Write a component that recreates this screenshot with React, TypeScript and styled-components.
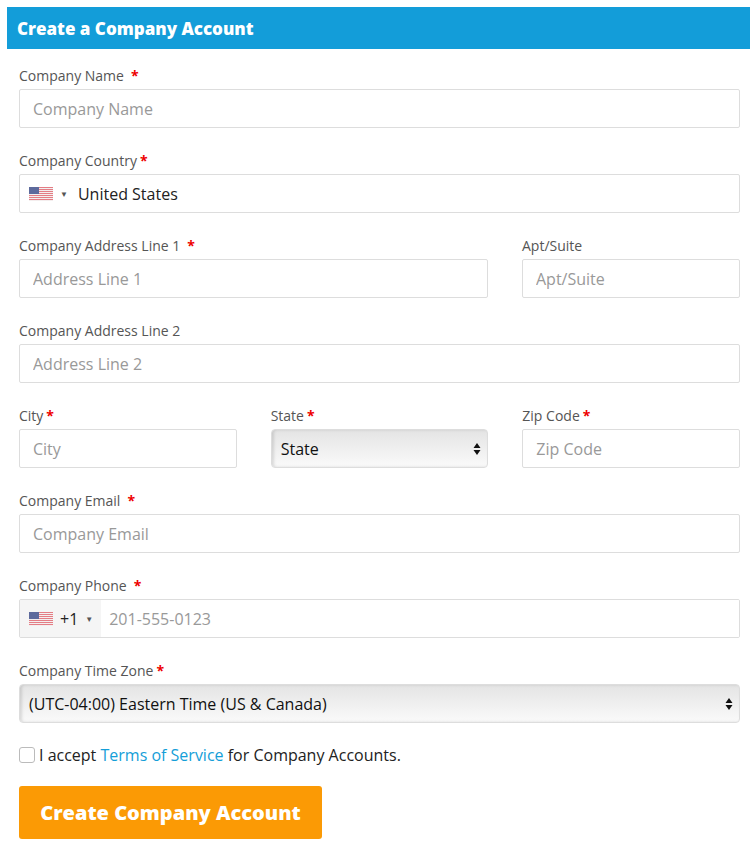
import React from "react";
import styled, { createGlobalStyle } from "styled-components";

const Global = createGlobalStyle`
  body { margin: 0; font-family: "Open Sans", sans-serif; background: #fff; }
  * { box-sizing: border-box; }
`;

const Page = styled.div`padding: 7px 6px 0 7px;`;
const Header = styled.div`
  background: #139dd9; color: #fff; font-weight: 800; font-size: 17px;
  height: 42px; display: flex; align-items: center; padding-left: 10px;
`;
const Form = styled.div`padding: 17px 10px 10px 12px; display: flex; flex-direction: column;`;
const Row = styled.div<{ cols: string }>`
  display: grid; grid-template-columns: ${p => p.cols}; column-gap: 34px;
`;
const Group = styled.div`display: flex; flex-direction: column; margin-bottom: 23px;`;
const Label = styled.label`
  font-size: 14px; color: #555; height: 20px; line-height: 20px; margin-bottom: 3px;
`;
const Star = styled.span<{ gap?: boolean }>`
  color: #e00; font-weight: 700; margin-left: ${p => (p.gap ? "7px" : "3px")};
`;
const Box = styled.div`
  height: 39px; border: 1px solid #ddd; border-radius: 2px; display: flex; align-items: center;
  font-size: 16px; color: #222; background: #fff; overflow: hidden;
`;
const Input = styled.input`
  height: 39px; border: 1px solid #ddd; border-radius: 2px; padding: 0 13px;
  font-family: "Open Sans", sans-serif; font-size: 16px; width: 100%;
  &::placeholder { color: #999; }
`;
const PhoneInput = styled.input`
  border: 0; flex: 1; height: 100%; padding: 0 8px;
  font-family: "Open Sans", sans-serif; font-size: 16px;
  &::placeholder { color: #999; }
`;
const Select = styled.div`
  height: 39px; border: 1px solid #ddd; border-radius: 4px; display: flex; align-items: center;
  justify-content: space-between; padding: 0 6px 0 9px; font-size: 16px; color: #111;
  background: linear-gradient(#e4e4e4, #fafafa);
  box-shadow: inset 2px 0 3px rgba(0,0,0,0.12);
`;
const FlagArea = styled.div<{ grey?: boolean }>`
  display: flex; align-items: center; gap: 7px; padding: 0 8px 0 9px; height: 100%;
  background: ${p => (p.grey ? "#f5f5f5" : "transparent")};
`;
const Caret = styled.span`font-size: 8px; color: #555;`;
const CheckRow = styled.div`display: flex; align-items: center; font-size: 16px; color: #222; margin-top: -2px;`;
const Check = styled.span`
  width: 16px; height: 16px; border: 1px solid #bbb; border-radius: 3px; margin-right: 4px;
`;
const Link = styled.a`color: #149ed8; text-decoration: none;`;
const Button = styled.button`
  margin-top: 20px; width: 303px; height: 53px; background: #fb9a05; color: #fff; border: 0;
  border-radius: 3px; font-family: "Open Sans", sans-serif; font-weight: 800; font-size: 20px;
`;

const Flag = () => (
  <svg width="24" height="14" viewBox="0 0 24 14">
    {Array.from({ length: 7 }).map((_, i) => (
      <rect key={i} x="0" y={i * 2} width="24" height="1" fill={"#e47d85"} />
    ))}
    <rect x="0" y="1" width="24" height="1" fill="#f2f2f2" />
    {[3, 5, 7, 9, 11, 13].map(y => <rect key={y} x="0" y={y} width="24" height="1" fill="#f4eeee" />)}
    <rect x="0" y="0" width="10" height="7" fill="#5d6a9c" />
  </svg>
);

const Arrows = () => (
  <svg width="8" height="14" viewBox="0 0 8 14">
    <path d="M4 1 L7.5 6 H0.5Z M4 13 L7.5 8 H0.5Z" fill="#111" />
  </svg>
);

export default function App() {
  return (
    <Page>
      <Global />
      <Header>Create a Company Account</Header>
      <Form>
        <Group>
          <Label>Company Name<Star gap>*</Star></Label>
          <Input placeholder="Company Name" />
        </Group>
        <Group>
          <Label>Company Country<Star>*</Star></Label>
          <Box>
            <FlagArea><Flag /><Caret>▼</Caret></FlagArea>
            <span style={{ marginLeft: 2 }}>United States</span>
          </Box>
        </Group>
        <Row cols="1fr 218px">
          <Group>
            <Label>Company Address Line 1<Star gap>*</Star></Label>
            <Input placeholder="Address Line 1" />
          </Group>
          <Group>
            <Label>Apt/Suite</Label>
            <Input placeholder="Apt/Suite" />
          </Group>
        </Row>
        <Group>
          <Label>Company Address Line 2</Label>
          <Input placeholder="Address Line 2" />
        </Group>
        <Row cols="1fr 1fr 1fr">
          <Group>
            <Label>City<Star>*</Star></Label>
            <Input placeholder="City" />
          </Group>
          <Group>
            <Label>State<Star>*</Star></Label>
            <Select>State<Arrows /></Select>
          </Group>
          <Group>
            <Label>Zip Code<Star>*</Star></Label>
            <Input placeholder="Zip Code" />
          </Group>
        </Row>
        <Group>
          <Label>Company Email<Star gap>*</Star></Label>
          <Input placeholder="Company Email" />
        </Group>
        <Group>
          <Label>Company Phone<Star gap>*</Star></Label>
          <Box>
            <FlagArea grey><Flag /><span>+1</span><Caret>▼</Caret></FlagArea>
            <PhoneInput placeholder="201-555-0123" />
          </Box>
        </Group>
        <Group>
          <Label>Company Time Zone<Star>*</Star></Label>
          <Select>(UTC-04:00) Eastern Time (US &amp; Canada)<Arrows /></Select>
        </Group>
        <CheckRow>
          <Check />I accept&nbsp;<Link href="#">Terms of Service</Link>&nbsp;for Company Accounts.
        </CheckRow>
        <Button>Create Company Account</Button>
      </Form>
    </Page>
  );
}
